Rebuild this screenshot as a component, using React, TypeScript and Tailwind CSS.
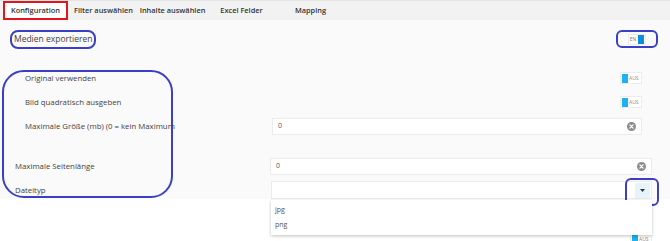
import React from 'react'

const font = { fontFamily: '"Open Sans", "Noto Sans", Arial, sans-serif' }

const tabs = ['Konfiguration', 'Filter auswählen', 'Inhalte auswählen', 'Excel Felder', 'Mapping']

function AusToggle() {
  return (
    <div className="flex h-[12px] w-[22px] items-center gap-[1px] border border-[#ececec] bg-white px-[1px]">
      <div className="h-[9px] w-[6px] bg-[#1bb1f2]" />
      <span className="text-[5px] leading-none text-[#8a8a8a]">AUS</span>
    </div>
  )
}

function ClearIcon() {
  return (
    <svg width="9" height="9" viewBox="0 0 10 10">
      <circle cx="5" cy="5" r="5" fill="#8c8c8c" />
      <path d="M3.2 3.2 L6.8 6.8 M6.8 3.2 L3.2 6.8" stroke="#fff" strokeWidth="1.4" strokeLinecap="round" />
    </svg>
  )
}

// row of the form: label on the left, control on the right
function Row({ label, indent, children, className }: { label: string; indent?: boolean; children?: React.ReactNode; className?: string }) {
  return (
    <div className={`flex h-[24px] items-center ${className || ''}`}>
      <div className={`w-[260px] shrink-0 pt-[2px] ${indent ? 'pl-[15px]' : 'pl-[5px]'}`}>
        <div className="whitespace-nowrap text-[7.8px] text-[#3f3f3f]">{label}</div>
      </div>
      <div className="flex flex-1 items-center">{children}</div>
    </div>
  )
}

export default function App() {
  return (
    <div style={font} className="relative h-[241px] w-[670px] overflow-hidden bg-white">
      {/* tab bar */}
      <div className="flex h-[20px] items-stretch border-t border-[#e4e4e4] bg-[#f2f2f2]">
        {tabs.map((t, i) =>
          i === 0 ? (
            <div key={t} className="w-[69px] pl-[3px] pr-[1px]">
              <div className="flex h-full items-center justify-center whitespace-nowrap border-2 border-[#e3161e] bg-white text-[7.4px] font-semibold text-[#333]">
                {t}
              </div>
            </div>
          ) : (
            <div key={t} className="flex w-[69px] items-center justify-center whitespace-nowrap text-[7.4px] font-semibold text-[#333]">
              {t}
            </div>
          )
        )}
      </div>

      {/* form panel */}
      <div className="h-[179px] bg-[#fafafa] pl-[10px]">
        <div className="box-content flex h-[20px] items-center justify-between pr-[12px] pt-[9px]">
          <div className="flex h-[19px] items-center rounded-[8px] border-2 border-[#3b3fc6] px-[2px] text-[8.5px] text-[#3f3f3f]">
            Medien exportieren
          </div>
          <div className="flex h-[18px] w-[42px] items-center justify-center rounded-[6px] border-2 border-[#3b3fc6]">
            <div className="flex h-[11px] items-center gap-[2px] border border-[#ececec] bg-white px-[1px]">
              <span className="text-[5px] leading-none text-[#777]">EN</span>
              <div className="h-[9px] w-[6px] bg-[#0b8fda]" />
            </div>
          </div>
        </div>

        <Row label="Original verwenden" indent className="mt-[17px]">
          <div className="ml-[350px]"><AusToggle /></div>
        </Row>
        <Row label="Bild quadratisch ausgeben" indent>
          <div className="ml-[350px]"><AusToggle /></div>
        </Row>
        <Row label="Maximale Größe (mb) (0 = kein Maximum" indent>
          <div className="ml-[2px] flex h-[17px] w-[370px] items-center justify-between border border-[#ebebeb] bg-white pl-[5px] pr-[5px]">
            <span className="text-[7px] text-[#555]">0</span>
            <ClearIcon />
          </div>
        </Row>
        <Row label="Maximale Seitenlänge" className="mt-[16px]">
          <div className="flex h-[17px] w-[382px] items-center justify-between border border-[#ebebeb] bg-white pl-[5px] pr-[5px]">
            <span className="text-[7px] text-[#555]">0</span>
            <ClearIcon />
          </div>
        </Row>
        <Row label="Dateityp">
          <div className="relative ml-[1px] flex h-[18px] w-[381px] items-center justify-end border border-[#ebebeb] bg-white pr-[1px]">
            <div className="absolute -right-[8px] -top-[4px] h-[28px] w-[34px] rounded-[6px] border-2 border-[#3b3fc6]" />
            <div className="flex h-[15px] w-[15px] items-center justify-center bg-[#e6f3fb]">
              <svg width="5" height="3" viewBox="0 0 5 3">
                <path d="M0 0 L5 0 L2.5 3 Z" fill="#333" />
              </svg>
            </div>
          </div>
        </Row>
      </div>

      <div className="flex justify-end pr-[18px] pt-[34px]">
        <AusToggle />
      </div>

      {/* open dropdown list */}
      <div className="absolute left-[271px] top-[200px] flex h-[35px] w-[381px] flex-col justify-center gap-[5px] bg-white pl-[4px] text-[7px] text-[#555] shadow-[0_1px_3px_rgba(0,0,0,0.25)]">
        <div>jpg</div>
        <div>png</div>
      </div>

      {/* annotation around the sub options */}
      <div className="absolute left-[2px] top-[70px] h-[128px] w-[171px] rounded-[22px] border-2 border-[#3b3fc6]" />
    </div>
  )
}
